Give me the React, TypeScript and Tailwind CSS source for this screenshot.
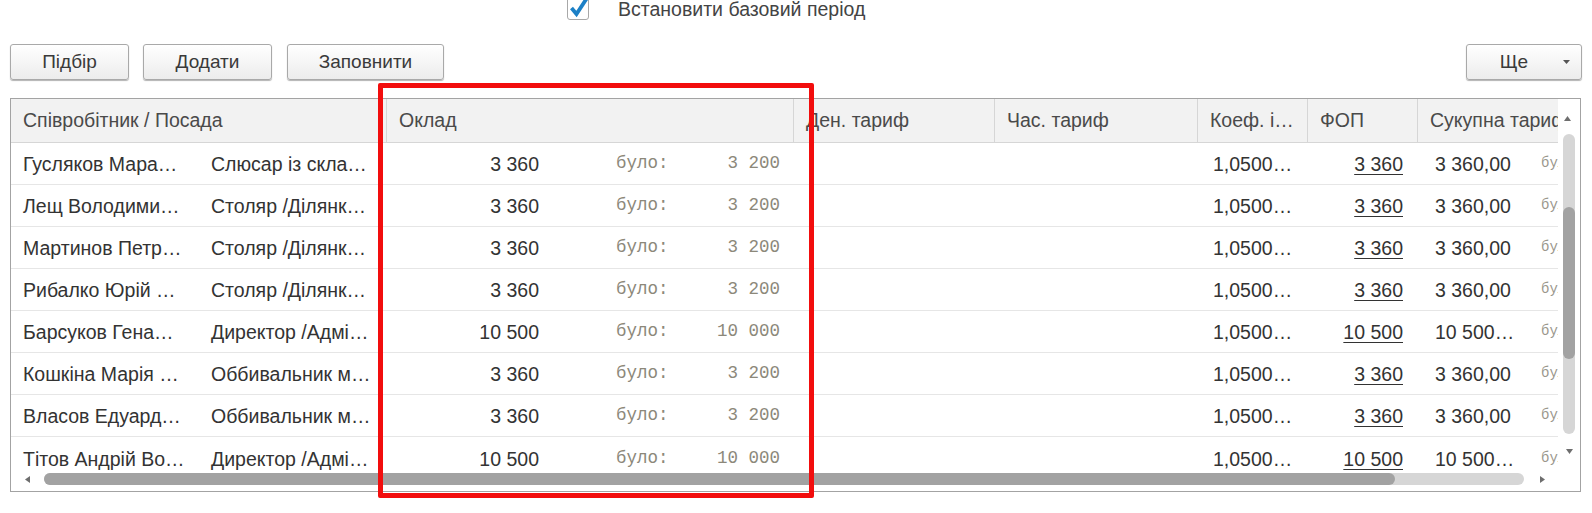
const rows = [
  { name: "Гусляков Мара…", pos: "Слюсар із скла…", salary: "3 360", was: "3 200", coef: "1,0500…", fop: "3 360", total: "3 360,00" },
  { name: "Лещ Володими…", pos: "Столяр /Ділянк…", salary: "3 360", was: "3 200", coef: "1,0500…", fop: "3 360", total: "3 360,00" },
  { name: "Мартинов Петр…", pos: "Столяр /Ділянк…", salary: "3 360", was: "3 200", coef: "1,0500…", fop: "3 360", total: "3 360,00" },
  { name: "Рибалко Юрій …", pos: "Столяр /Ділянк…", salary: "3 360", was: "3 200", coef: "1,0500…", fop: "3 360", total: "3 360,00" },
  { name: "Барсуков Гена…", pos: "Директор /Адмі…", salary: "10 500", was: "10 000", coef: "1,0500…", fop: "10 500", total: "10 500…" },
  { name: "Кошкіна Марія …", pos: "Оббивальник м…", salary: "3 360", was: "3 200", coef: "1,0500…", fop: "3 360", total: "3 360,00" },
  { name: "Власов Едуард…", pos: "Оббивальник м…", salary: "3 360", was: "3 200", coef: "1,0500…", fop: "3 360", total: "3 360,00" },
  { name: "Тітов Андрій Во…", pos: "Директор /Адмі…", salary: "10 500", was: "10 000", coef: "1,0500…", fop: "10 500", total: "10 500…" },
];

const headers = [
  { label: "Співробітник / Посада", w: "w-[376px]" },
  { label: "Оклад", w: "w-[407px]" },
  { label: "Ден. тариф", w: "w-[201px]" },
  { label: "Час. тариф", w: "w-[203px]" },
  { label: "Коеф. і…", w: "w-[110px]" },
  { label: "ФОП", w: "w-[110px]" },
  { label: "Сукупна тариф", w: "w-[140px]" },
];

function Button({ label, w }: { label: string; w: string }) {
  return (
    <button
      className={`${w} h-[36px] rounded-[3px] border border-[#a9a9a9] bg-gradient-to-b from-white to-[#ececec] shadow-[0_1px_1px_rgba(0,0,0,0.3)] text-[19px] text-[#3a3a3a]`}
    >
      {label}
    </button>
  );
}

function Tri({ dir }: { dir: "up" | "down" | "left" | "right" }) {
  const pts = {
    up: "0,5 7,5 3.5,0",
    down: "0,0 7,0 3.5,5",
    left: "5,0 5,7 0,3.5",
    right: "0,0 0,7 5,3.5",
  }[dir];
  const size = dir === "up" || dir === "down" ? "w-[7px] h-[5px]" : "w-[5px] h-[7px]";
  const vb = dir === "up" || dir === "down" ? "0 0 7 5" : "0 0 5 7";
  return (
    <svg viewBox={vb} className={size}>
      <polygon points={pts} fill="#6e6e6e" />
    </svg>
  );
}

export default function App() {
  return (
    <div className="relative w-[1592px] h-[513px] overflow-hidden bg-white font-['Liberation_Sans',Arial,sans-serif] text-[#333]">
      {/* Checkbox */}
      <div className="flex items-center h-[20px] pl-[567px]">
        <div className="relative w-[22px] h-[23px] -mt-[3px] rounded-[3px] border border-[#a8a8a8] bg-white">
          <svg viewBox="0 0 22 24" className="absolute left-[0px] -top-[3px] w-[22px] h-[24px]">
            <path d="M3.5 13 L8.5 19 L19 3" fill="none" stroke="#1c80c6" strokeWidth="3.8" />
          </svg>
        </div>
        <span className="ml-[29px] text-[19.5px] text-[#444]">Встановити базовий період</span>
      </div>

      {/* Toolbar */}
      <div className="flex items-start mt-[24px] px-[10px]">
        <Button label="Підбір" w="w-[119px]" />
        <div className="w-[14px]" />
        <Button label="Додати" w="w-[129px]" />
        <div className="w-[15px]" />
        <Button label="Заповнити" w="w-[157px]" />
        <div className="flex-1" />
        <button className="w-[116px] h-[36px] rounded-[3px] border border-[#a9a9a9] bg-gradient-to-b from-white to-[#ececec] shadow-[0_1px_1px_rgba(0,0,0,0.3)] text-[19px] text-[#3a3a3a] flex items-center">
          <span className="flex-1 pl-[10px] text-center">Ще</span>
          <span className="w-[30px] flex justify-center">
            <svg viewBox="0 0 7 4" className="w-[7px] h-[4px]">
              <polygon points="0,0 7,0 3.5,4" fill="#555" />
            </svg>
          </span>
        </button>
      </div>

      {/* Table */}
      <div className="relative mt-[18px] ml-[10px] w-[1571px] h-[394px] border border-[#a3a3a3] overflow-hidden">
        <div className="w-[1547px]">
          <div className="flex h-[44px] bg-[#f2f2f2] border-b border-[#d6d6d6]">
            {headers.map((h, i) => (
              <div
                key={h.label}
                className={`${h.w} shrink-0 flex items-center pl-[12px] whitespace-nowrap overflow-hidden text-[19.5px] text-[#4a4a4a] ${i < headers.length - 1 ? "border-r border-[#d6d6d6]" : ""}`}
              >
                {h.label}
              </div>
            ))}
          </div>
          {rows.map((r, i) => (
            <div
              key={i}
              className={`flex h-[42px] items-center text-[19.5px] text-[#333] whitespace-nowrap ${i < rows.length - 1 ? "border-b border-[#e6e6e6]" : ""}`}
            >
              <div className="w-[187px] shrink-0 pl-[12px] pt-[3px]">{r.name}</div>
              <div className="w-[189px] shrink-0 pl-[13px] pt-[3px]">{r.pos}</div>
              <div className="w-[407px] shrink-0 flex items-center">
                <div className="w-[162px] pr-[10px] text-right pt-[3px]">{r.salary}</div>
                <div className="ml-[67px] w-[164px] flex justify-between font-['Liberation_Mono',monospace] text-[17.5px] text-[#8c887a]">
                  <span>було:</span>
                  <span>{r.was.replace(" ", "\u00a0")}</span>
                </div>
              </div>
              <div className="w-[201px] shrink-0" />
              <div className="w-[203px] shrink-0" />
              <div className="w-[110px] shrink-0 pl-[15px] pt-[3px]">{r.coef}</div>
              <div className="w-[110px] shrink-0 pr-[15px] text-right pt-[3px]">
                <span className="underline underline-offset-[3px]">{r.fop}</span>
              </div>
              <div className="w-[140px] shrink-0 flex items-center overflow-hidden">
                <div className="w-[123px] shrink-0 pl-[17px] pt-[3px]">{r.total}</div>
                <span className="font-['Liberation_Mono',monospace] text-[14px] text-[#9a978c]">було:</span>
              </div>
            </div>
          ))}
        </div>

        {/* Vertical scrollbar */}
        <div className="absolute right-0 top-0 bottom-0 w-[22px] bg-white">
          <div className="absolute left-[6px] top-[17px]">
            <Tri dir="up" />
          </div>
          <div className="absolute left-[5px] top-[35px] w-[12px] h-[300px] rounded-full bg-[#d6d6d6]">
            <div className="mt-[73px] h-[152px] rounded-full bg-[#a2a2a2]" />
          </div>
          <div className="absolute left-[8px] top-[350px]">
            <Tri dir="down" />
          </div>
        </div>

        {/* Horizontal scrollbar */}
        <div className="absolute left-0 bottom-0 w-[1547px] h-[20px] bg-white">
          <div className="absolute left-[14px] top-[5px]">
            <Tri dir="left" />
          </div>
          <div className="absolute left-[33px] top-[2px] w-[1480px] h-[12px] rounded-full bg-[#d6d6d6]">
            <div className="w-[1351px] h-[12px] rounded-full bg-[#a2a2a2]" />
          </div>
          <div className="absolute left-[1529px] top-[5px]">
            <Tri dir="right" />
          </div>
        </div>
      </div>

      {/* Highlight frame */}
      <div className="absolute left-[378px] top-[83px] w-[436px] h-[415px] border-[5px] border-[#f20d0d] rounded-[2px]" />
    </div>
  );
}
